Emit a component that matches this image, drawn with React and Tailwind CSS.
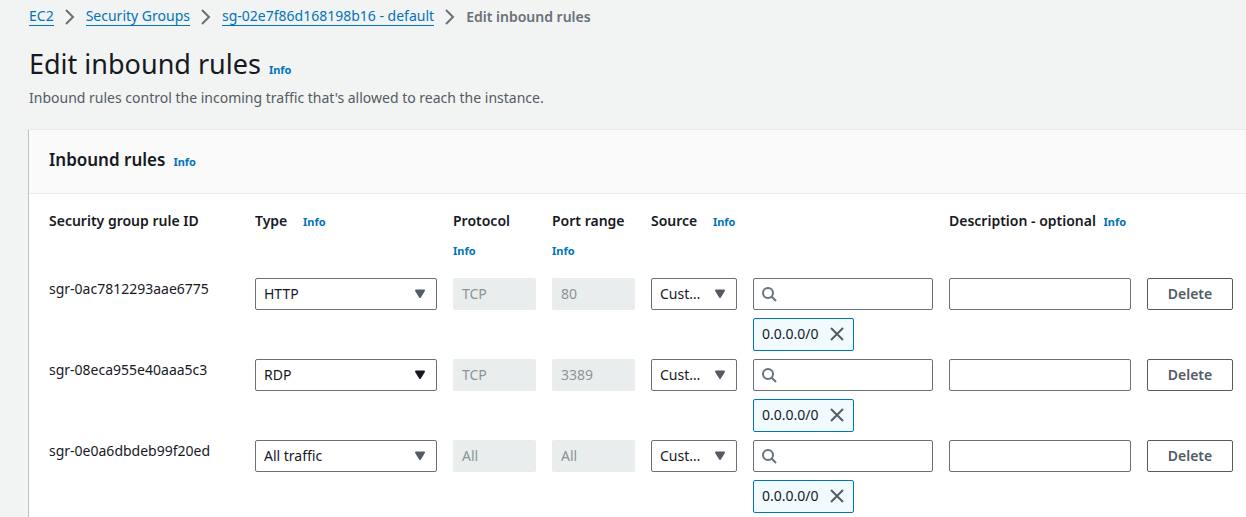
import React from "react";

const RULES = [
  { id: "sgr-0ac7812293aae6775", type: "HTTP", protocol: "TCP", port: "80" },
  { id: "sgr-08eca955e40aaa5c3", type: "RDP", protocol: "TCP", port: "3389", active: true },
  { id: "sgr-0e0a6dbdeb99f20ed", type: "All traffic", protocol: "All", port: "All" },
];

const TYPES = ["HTTP", "RDP", "All traffic"];
const CONTROL = "block h-8 w-full rounded-xs border border-[#687078] bg-white text-[#16191f]";

function Info({ className = "" }) {
  return (
    <a href="#info" className={`text-[11px] font-bold leading-[22px] text-[#0073bb] ${className}`}>
      Info
    </a>
  );
}

function Chevron() {
  return (
    <svg aria-hidden="true" viewBox="0 0 16 16" className="mx-2 h-4 w-4 shrink-0 fill-none stroke-[#687078] stroke-2">
      <path d="M4 1l7 7-7 7" />
    </svg>
  );
}

function Crumb({ children }) {
  return (
    <a href="#crumb" className="border-b border-[#0073bb] leading-[18px] text-[#0073bb]">
      {children}
    </a>
  );
}

function Select({ label, value, options, active }) {
  return (
    <div className="relative">
      <select
        aria-label={label}
        defaultValue={value}
        className={`${CONTROL} appearance-none overflow-hidden text-ellipsis whitespace-nowrap pl-2 pr-8`}
      >
        {options.map((o) => (
          <option key={o}>{o}</option>
        ))}
      </select>
      <svg
        aria-hidden="true"
        viewBox="0 0 16 16"
        className={`pointer-events-none absolute right-[9px] top-2 h-4 w-4 ${
          active ? "fill-[#16191f] stroke-[#16191f]" : "fill-[#545b64] stroke-[#545b64]"
        }`}
      >
        <path d="M4 4.5h8l-4 6.5z" strokeLinejoin="round" strokeWidth="2" />
      </svg>
    </div>
  );
}

function Disabled({ label, value }) {
  return (
    <input
      disabled
      aria-label={label}
      defaultValue={value}
      className="block h-8 w-full rounded-xs border border-[#eaeded] bg-[#eaeded] px-2 pb-0.5 text-[#879596]"
    />
  );
}

function SourceSearch({ id }) {
  return (
    <div>
      <div className="relative">
        <input type="text" aria-label={`Source for ${id}`} className={`${CONTROL} pl-8 pr-2`} />
        <svg
          aria-hidden="true"
          viewBox="0 0 16 16"
          className="pointer-events-none absolute left-2 top-2 h-4 w-4 fill-none stroke-[#687078] stroke-2"
        >
          <circle cx="7" cy="7" r="5" />
          <path d="M15 15l-4.5-4.5" />
        </svg>
      </div>
      <div className="mt-2 inline-flex h-[33px] items-center gap-2.5 rounded-xs border border-[#0073bb] bg-[#f1faff] px-2 pb-px align-top text-[#16191f]">
        <span>0.0.0.0/0</span>
        <button type="button" aria-label="Remove 0.0.0.0/0">
          <svg aria-hidden="true" viewBox="0 0 16 16" className="block h-4 w-4 fill-none stroke-[#545b64] stroke-2">
            <path d="M2 2l12 12M14 2L2 14" />
          </svg>
        </button>
      </div>
    </div>
  );
}

export default function App() {
  return (
    <div className="flex min-h-screen flex-col bg-[#f2f3f3] pl-7 font-['Noto_Sans','Open_Sans',sans-serif] text-sm leading-[22px] text-[#16191f]">
      <nav aria-label="Breadcrumb" className="flex items-center pl-px pt-[7px]">
        <Crumb>EC2</Crumb>
        <Chevron />
        <Crumb>Security Groups</Crumb>
        <Chevron />
        <Crumb>sg-02e7f86d168198b16 - default</Crumb>
        <Chevron />
        <span className="font-semibold leading-[19px] text-[#687078]">Edit inbound rules</span>
      </nav>

      <header className="pb-5 pl-px pt-5">
        <div className="flex items-baseline gap-2">
          <h1 className="text-[27px] leading-9">Edit inbound rules</h1>
          <Info />
        </div>
        <p className="mt-[5px] text-[#545b64]">Inbound rules control the incoming traffic that's allowed to reach the instance.</p>
      </header>

      <main className="flex-1 border-l border-t border-l-[#bcc2c4] border-t-[#eaeded] bg-white">
        <div className="flex items-baseline gap-2 border-b border-[#eaeded] bg-[#fafafa] px-5 pb-5 pt-[19px]">
          <h2 className="text-[17px] font-semibold leading-[22px]">Inbound rules</h2>
          <Info />
        </div>
        <div className="pl-5 pr-[13px] pt-4">
          <table className="w-full table-fixed border-collapse text-left">
            <colgroup>
              <col className="w-[206px]" />
              <col className="w-[198px]" />
              <col className="w-[99px]" />
              <col className="w-[99px]" />
              <col className="w-[102px]" />
              <col className="w-[196px]" />
              <col className="w-[198px]" />
              <col className="w-[86px]" />
            </colgroup>
            <thead>
              <tr className="h-[68px] align-top leading-[22px]">
                <th className="font-semibold">Security group rule ID</th>
                <th className="font-semibold">
                  Type <Info className="ml-3" />
                </th>
                <th className="font-semibold">
                  Protocol <Info className="mt-2 block" />
                </th>
                <th className="font-semibold">
                  Port range <Info className="mt-2 block" />
                </th>
                <th colSpan={2} className="font-semibold">
                  Source <Info className="ml-3" />
                </th>
                <th colSpan={2} className="whitespace-nowrap font-semibold">
                  Description - optional <Info className="ml-1" />
                </th>
              </tr>
            </thead>
            <tbody>
              {RULES.map((r) => (
                <tr key={r.id} className="align-top">
                  <td className="pb-2 pr-4">{r.id}</td>
                  <td className="pb-2 pr-4">
                    <Select label={`Type for ${r.id}`} value={r.type} options={TYPES} active={r.active} />
                  </td>
                  <td className="pb-2 pr-4">
                    <Disabled label={`Protocol for ${r.id}`} value={r.protocol} />
                  </td>
                  <td className="pb-2 pr-4">
                    <Disabled label={`Port range for ${r.id}`} value={r.port} />
                  </td>
                  <td className="pb-2 pr-4">
                    <Select label={`Source type for ${r.id}`} value="Custom" options={["Custom"]} />
                  </td>
                  <td className="pb-2 pr-4">
                    <SourceSearch id={r.id} />
                  </td>
                  <td className="pb-2 pr-4">
                    <input type="text" aria-label={`Description for ${r.id}`} className={`${CONTROL} px-2`} />
                  </td>
                  <td className="pb-2">
                    <button
                      type="button"
                      className="block h-8 w-full rounded-xs border border-[#545b64] bg-white font-semibold text-[#545b64]"
                    >
                      Delete
                    </button>
                  </td>
                </tr>
              ))}
            </tbody>
          </table>
        </div>
      </main>
    </div>
  );
}
